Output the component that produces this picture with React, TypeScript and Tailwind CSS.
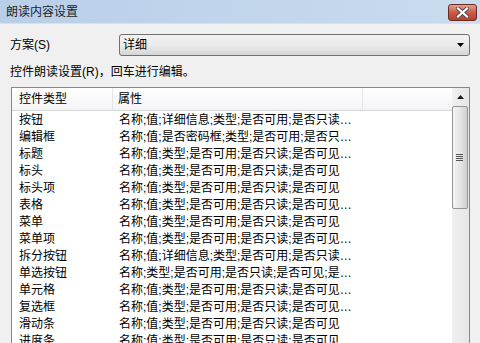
const rows = [
  ["按钮", "名称;值;详细信息;类型;是否可用;是否只读…"],
  ["编辑框", "名称;值;是否密码框;类型;是否可用;是否只…"],
  ["标题", "名称;值;类型;是否可用;是否只读;是否可见…"],
  ["标头", "名称;值;类型;是否可用;是否只读;是否可见"],
  ["标头项", "名称;值;类型;是否可用;是否只读;是否可见"],
  ["表格", "名称;值;类型;是否可用;是否只读;是否可见…"],
  ["菜单", "名称;值;类型;是否可用;是否只读;是否可见"],
  ["菜单项", "名称;值;类型;是否可用;是否只读;是否可见…"],
  ["拆分按钮", "名称;值;详细信息;类型;是否可用;是否只读…"],
  ["单选按钮", "名称;类型;是否可用;是否只读;是否可见;是…"],
  ["单元格", "名称;值;类型;是否可用;是否只读;是否可见…"],
  ["复选框", "名称;值;类型;是否可用;是否只读;是否可见…"],
  ["滑动条", "名称;值;类型;是否可用;是否只读;是否可见"],
  ["进度条", "名称;值;类型;是否可用;是否只读;是否可见"],
];

function CloseButton() {
  return (
    <div className="w-[29px] h-[17px] rounded-[3px] border border-[#6b2b25] bg-gradient-to-b from-[#e3a092] via-[#c95c4c] to-[#b5402f] flex items-center justify-center">
      <svg width="13" height="11" viewBox="0 0 13 11">
        <path
          d="M2 1.5 L11 9.5 M11 1.5 L2 9.5"
          stroke="#4a4a4a"
          strokeWidth="4"
          strokeLinecap="square"
        />
        <path
          d="M2 1.5 L11 9.5 M11 1.5 L2 9.5"
          stroke="#ffffff"
          strokeWidth="2.2"
          strokeLinecap="square"
        />
      </svg>
    </div>
  );
}

export default function App() {
  return (
    <div className="w-[480px] h-[343px] overflow-hidden bg-[#f0f0f0] flex flex-col text-[12px] text-black font-['Liberation_Sans','Noto_Sans_CJK_SC',sans-serif]">
      {/* title bar */}
      <div className="h-[24px] shrink-0 flex items-start justify-between pl-[6px] pr-[3px] bg-gradient-to-r from-[#b9cfe8] to-[#c9dbef] border-b border-[#d6e2f0]">
        <span className="leading-[24px] text-[#1e1e1e]">朗读内容设置</span>
        <div className="pt-[4px]">
          <CloseButton />
        </div>
      </div>

      <div className="flex flex-col pl-[10px] pr-[10px]">
        <div className="mt-[10px] flex items-center h-[22px]">
          <span className="w-[109px]">方案(S)</span>
          <div className="flex-1 h-[22px] rounded-[3px] border border-[#707070] bg-gradient-to-b from-[#f3f3f3] via-[#ebebeb] to-[#d6d6d6] flex items-center justify-between pl-[3px] pr-[5px]">
            <span className="leading-[20px]">详细</span>
            <svg width="7" height="4" viewBox="0 0 7 4">
              <path d="M0 0 H7 L3.5 4 Z" fill="#000" />
            </svg>
          </div>
        </div>

        <div className="mt-[8px] leading-[17px]">控件朗读设置(R)，回车进行编辑。</div>

        <div className="mt-[6px] ml-[1px] h-[300px] border border-[#828790] bg-white flex">
          <div className="flex-1 flex flex-col min-w-0">
            <div className="h-[23px] shrink-0 flex border-b border-[#d5d5d5] bg-gradient-to-b from-white to-[#f3f4f6]">
              <div className="w-[101px] pl-[7px] leading-[22px] border-r border-[#e3e5e8]">控件类型</div>
              <div className="w-[250px] pl-[5px] leading-[22px] border-r border-[#e3e5e8]">属性</div>
              <div className="flex-1" />
            </div>
            <div className="pt-[1px] flex flex-col">
              {rows.map((r) => (
                <div key={r[0]} className="h-[17px] flex leading-[17px] whitespace-nowrap">
                  <div className="w-[102px] pl-[7px]">{r[0]}</div>
                  <div className="w-[250px] pl-[5px] overflow-hidden">{r[1]}</div>
                </div>
              ))}
            </div>
          </div>

          {/* scrollbar */}
          <div className="w-[17px] shrink-0 bg-gradient-to-r from-[#f0f0f0] to-[#e6e6e6] flex flex-col">
            <div className="h-[17px] flex items-center justify-center">
              <svg width="7" height="4" viewBox="0 0 7 4">
                <path d="M3.5 0 L7 4 H0 Z" fill="#1a1a1a" />
              </svg>
            </div>
            <div className="mt-[1px] mr-[1px] h-[103px] rounded-[2px] border border-[#969696] bg-gradient-to-r from-[#f4f4f4] via-[#e6e6e6] to-[#cfcfcf] flex flex-col items-center justify-center gap-[1px] pr-[1px]">
              <div className="w-[7px] h-[1px] bg-[#555]" />
              <div className="w-[7px] h-[1px] bg-[#555]" />
              <div className="w-[7px] h-[1px] bg-[#555]" />
              <div className="w-[7px] h-[1px] bg-[#555]" />
            </div>
          </div>
        </div>
      </div>
    </div>
  );
}
